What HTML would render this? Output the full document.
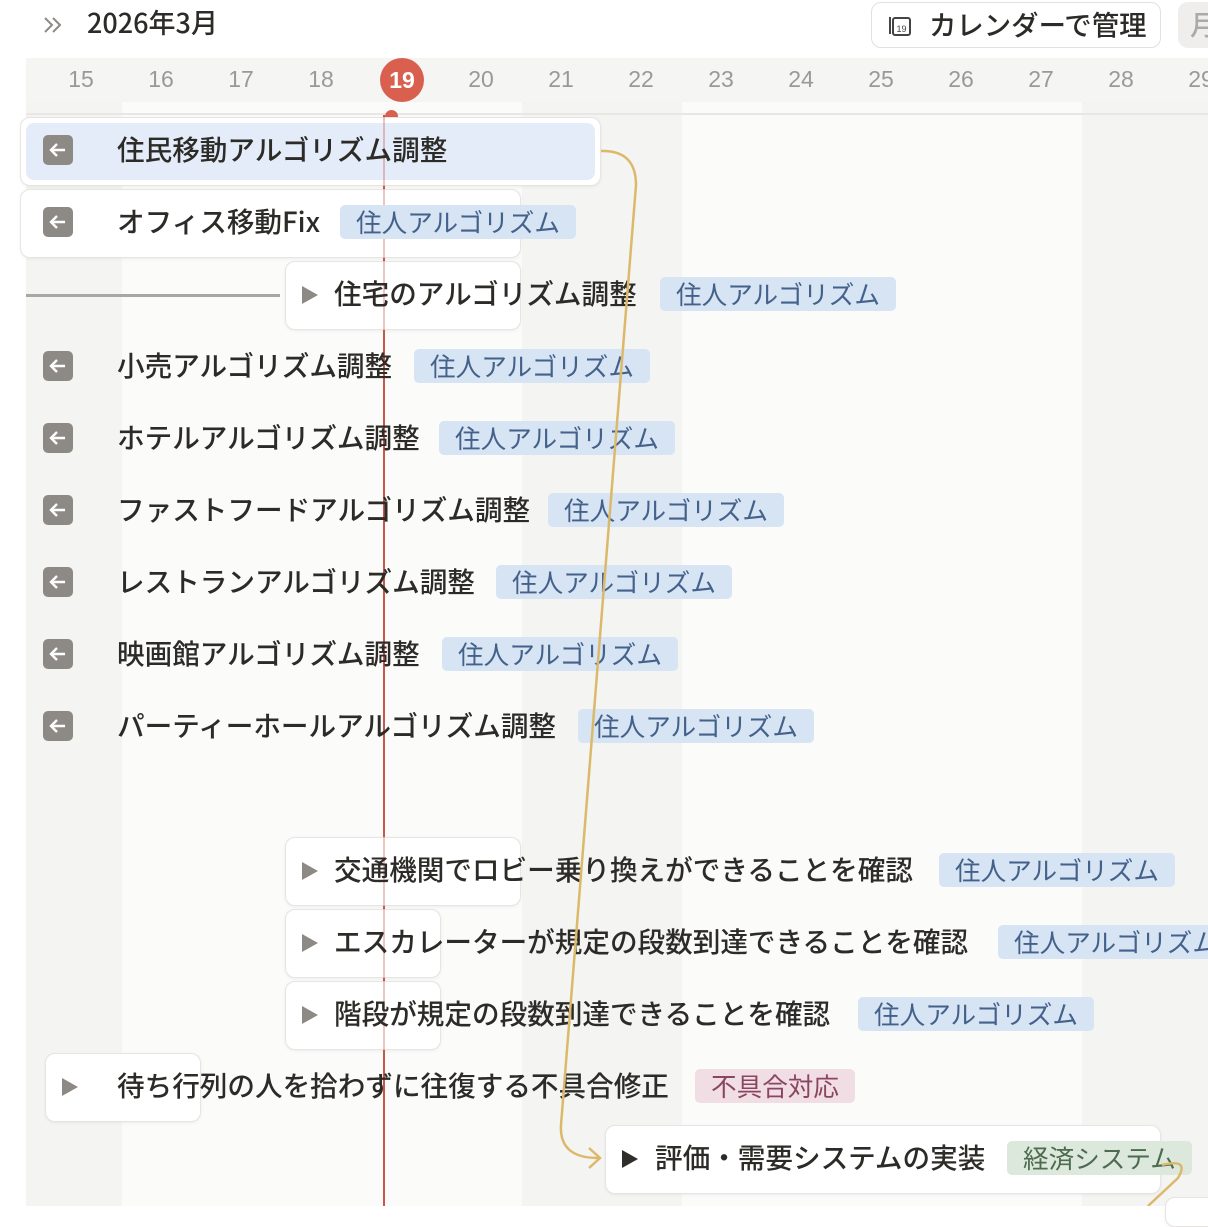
<!DOCTYPE html>
<html><head><meta charset="utf-8"><style>
*{margin:0;padding:0;box-sizing:border-box}
body{width:1208px;height:1206px;overflow:hidden;background:#fff;font-family:"Liberation Sans","Noto Sans CJK JP",sans-serif;color:#2f2e2b;position:relative}
.a{position:absolute}
.col{position:absolute;top:102px;bottom:0}
.day{position:absolute;top:66px;width:80px;text-align:center;font-size:23px;color:#9a9996}
.card{position:absolute;background:#fff;border:1.5px solid #e6e5e3;border-radius:10px;box-shadow:0 1px 3px rgba(0,0,0,.06)}
.t{position:absolute;font-size:27.6px;font-weight:500;white-space:nowrap;line-height:34px;font-family:"Noto Sans CJK JP",sans-serif;color:#2c2b28;transform:translateY(-2px)}
.tag{position:absolute;height:34px;line-height:34px;padding:0 16px;border-radius:5px;font-size:25.6px;background:#d6e4f4;color:#44618a;white-space:nowrap;font-family:"Noto Sans CJK JP",sans-serif}
.tri{position:absolute;width:0;height:0;border-left:16px solid #8d8a85;border-top:9px solid transparent;border-bottom:9px solid transparent}
</style></head><body>
<div class="col" style="left:26px;width:96px;background:#f4f4f3"></div>
<div class="col" style="left:122px;width:400px;background:#fbfbfa"></div>
<div class="col" style="left:522px;width:160px;background:#f4f4f3"></div>
<div class="col" style="left:682px;width:400px;background:#fbfbfa"></div>
<div class="col" style="left:1082px;width:126px;background:#f4f4f3"></div>
<div class="a" style="left:26px;top:58px;width:1182px;height:44px;background:#f5f5f4"></div>
<div class="a" style="left:26px;top:113px;width:1182px;height:2px;background:#e8e7e5"></div>

<svg class="a" style="left:42px;top:14px" width="24" height="22" viewBox="0 0 24 22"><path d="M3 4l7 7-7 7M11 4l7 7-7 7" fill="none" stroke="#8d8a85" stroke-width="2"/></svg>
<div class="t" style="left:87px;top:7px;font-size:27px">2026年3月</div>
<div class="a" style="left:871px;top:2px;width:290px;height:46px;border:1.5px solid #e2e1df;border-radius:10px;background:#fff"></div>
<svg class="a" style="left:888px;top:13px" width="26" height="26" viewBox="0 0 26 26"><rect x="5" y="5" width="17" height="17" rx="2" fill="none" stroke="#444" stroke-width="2"/><path d="M2 4v17" stroke="#444" stroke-width="2"/><text x="13.5" y="19" font-size="9" text-anchor="middle" font-family="Liberation Sans" fill="#444">19</text></svg>
<div class="t" style="left:929px;top:8px;font-size:27.4px">カレンダーで管理</div>
<div class="a" style="left:1178px;top:2px;width:40px;height:46px;border-radius:10px;background:#efeeec"></div>
<div class="t" style="left:1190px;top:8px;color:#aaa">月</div>

<div class="day" style="left:41px">15</div><div class="day" style="left:121px">16</div><div class="day" style="left:201px">17</div><div class="day" style="left:281px">18</div>
<div class="a" style="left:380px;top:58px;width:44px;height:44px;border-radius:50%;background:#d9604f;color:#fff;font-size:23px;text-align:center;line-height:44px;font-weight:bold">19</div>
<div class="day" style="left:441px">20</div><div class="day" style="left:521px">21</div><div class="day" style="left:601px">22</div><div class="day" style="left:681px">23</div><div class="day" style="left:761px">24</div><div class="day" style="left:841px">25</div><div class="day" style="left:921px">26</div><div class="day" style="left:1001px">27</div><div class="day" style="left:1081px">28</div><div class="day" style="left:1161px">29</div>

<div class="a" style="left:383px;top:115px;width:2px;height:1091px;background:#c9574a"></div>
<div class="a" style="left:385px;top:110px;width:13px;height:13px;border-radius:50%;background:#d9604f"></div>

<div class="card" style="left:20px;top:117px;width:581px;height:69px;padding:5px"><div style="background:#e3ecf8;border-radius:8px;height:100%"></div></div>
<div class="card" style="left:20px;top:189px;width:501px;height:69px"></div>
<div class="a" style="left:26px;top:294px;width:254px;height:3px;background:#a9a7a3"></div>
<div class="card" style="left:285px;top:261px;width:236px;height:69px"></div>
<div class="card" style="left:285px;top:837px;width:236px;height:69px"></div>
<div class="card" style="left:285px;top:909px;width:156px;height:69px"></div>
<div class="card" style="left:285px;top:981px;width:156px;height:69px"></div>
<div class="card" style="left:45px;top:1053px;width:156px;height:69px"></div>
<div class="card" style="left:605px;top:1125px;width:556px;height:69px"></div>
<div class="card" style="left:1165px;top:1197px;width:60px;height:30px"></div>

<div class="a" style="left:383px;top:115px;width:2px;height:1091px;background:#c9574a;opacity:.35"></div>

<svg width="0" height="0" style="position:absolute"><defs><g id="ar"><rect width="30" height="30" rx="5" fill="#8d8a85"/><path d="M22 15H9M14 9l-6 6 6 6" fill="none" stroke="#fff" stroke-width="2.4"/></g></defs></svg>
<svg class="a" style="left:43px;top:135px" width="30" height="30"><use href="#ar"/></svg>
<svg class="a" style="left:43px;top:207px" width="30" height="30"><use href="#ar"/></svg>
<svg class="a" style="left:43px;top:351px" width="30" height="30"><use href="#ar"/></svg>
<svg class="a" style="left:43px;top:423px" width="30" height="30"><use href="#ar"/></svg>
<svg class="a" style="left:43px;top:495px" width="30" height="30"><use href="#ar"/></svg>
<svg class="a" style="left:43px;top:567px" width="30" height="30"><use href="#ar"/></svg>
<svg class="a" style="left:43px;top:639px" width="30" height="30"><use href="#ar"/></svg>
<svg class="a" style="left:43px;top:711px" width="30" height="30"><use href="#ar"/></svg>

<div class="t" style="left:117px;top:133px">住民移動アルゴリズム調整</div>
<div class="t" style="left:117px;top:205px">オフィス移動Fix</div><div class="tag" style="left:340px;top:205px">住人アルゴリズム</div>
<div class="tri" style="left:302px;top:286px"></div><div class="t" style="left:334px;top:277px">住宅のアルゴリズム調整</div><div class="tag" style="left:660px;top:277px">住人アルゴリズム</div>
<div class="t" style="left:117px;top:349px">小売アルゴリズム調整</div><div class="tag" style="left:414px;top:349px">住人アルゴリズム</div>
<div class="t" style="left:117px;top:421px">ホテルアルゴリズム調整</div><div class="tag" style="left:439px;top:421px">住人アルゴリズム</div>
<div class="t" style="left:117px;top:493px">ファストフードアルゴリズム調整</div><div class="tag" style="left:548px;top:493px">住人アルゴリズム</div>
<div class="t" style="left:117px;top:565px">レストランアルゴリズム調整</div><div class="tag" style="left:496px;top:565px">住人アルゴリズム</div>
<div class="t" style="left:117px;top:637px">映画館アルゴリズム調整</div><div class="tag" style="left:442px;top:637px">住人アルゴリズム</div>
<div class="t" style="left:117px;top:709px">パーティーホールアルゴリズム調整</div><div class="tag" style="left:578px;top:709px">住人アルゴリズム</div>

<div class="tri" style="left:302px;top:862px"></div><div class="t" style="left:334px;top:853px">交通機関でロビー乗り換えができることを確認</div><div class="tag" style="left:939px;top:853px">住人アルゴリズム</div>
<div class="tri" style="left:302px;top:934px"></div><div class="t" style="left:334px;top:925px">エスカレーターが規定の段数到達できることを確認</div><div class="tag" style="left:998px;top:925px">住人アルゴリズム</div>
<div class="tri" style="left:302px;top:1006px"></div><div class="t" style="left:334px;top:997px">階段が規定の段数到達できることを確認</div><div class="tag" style="left:858px;top:997px">住人アルゴリズム</div>
<div class="tri" style="left:62px;top:1078px"></div><div class="t" style="left:117px;top:1069px">待ち行列の人を拾わずに往復する不具合修正</div><div class="tag" style="left:695px;top:1069px;background:#f1dde4;color:#8a4660">不具合対応</div>
<div class="tri" style="left:622px;top:1150px;border-left-color:#2f2e2b"></div><div class="t" style="left:655px;top:1141px">評価・需要システムの実装</div><div class="tag" style="left:1007px;top:1141px;background:#dde8dd;color:#4c6b50">経済システム</div>

<svg class="a" style="left:0;top:0" width="1208" height="1206"><path d="M601 151 Q636 150 636 185 L561 1125 Q559 1158 598 1158 M589 1148l11 10-11 10" fill="none" stroke="#dcb96a" stroke-width="2.5"/><path d="M1162 1165 Q1190 1158 1178 1178 L1148 1206" fill="none" stroke="#dcb96a" stroke-width="2.5"/></svg>
</body></html>
